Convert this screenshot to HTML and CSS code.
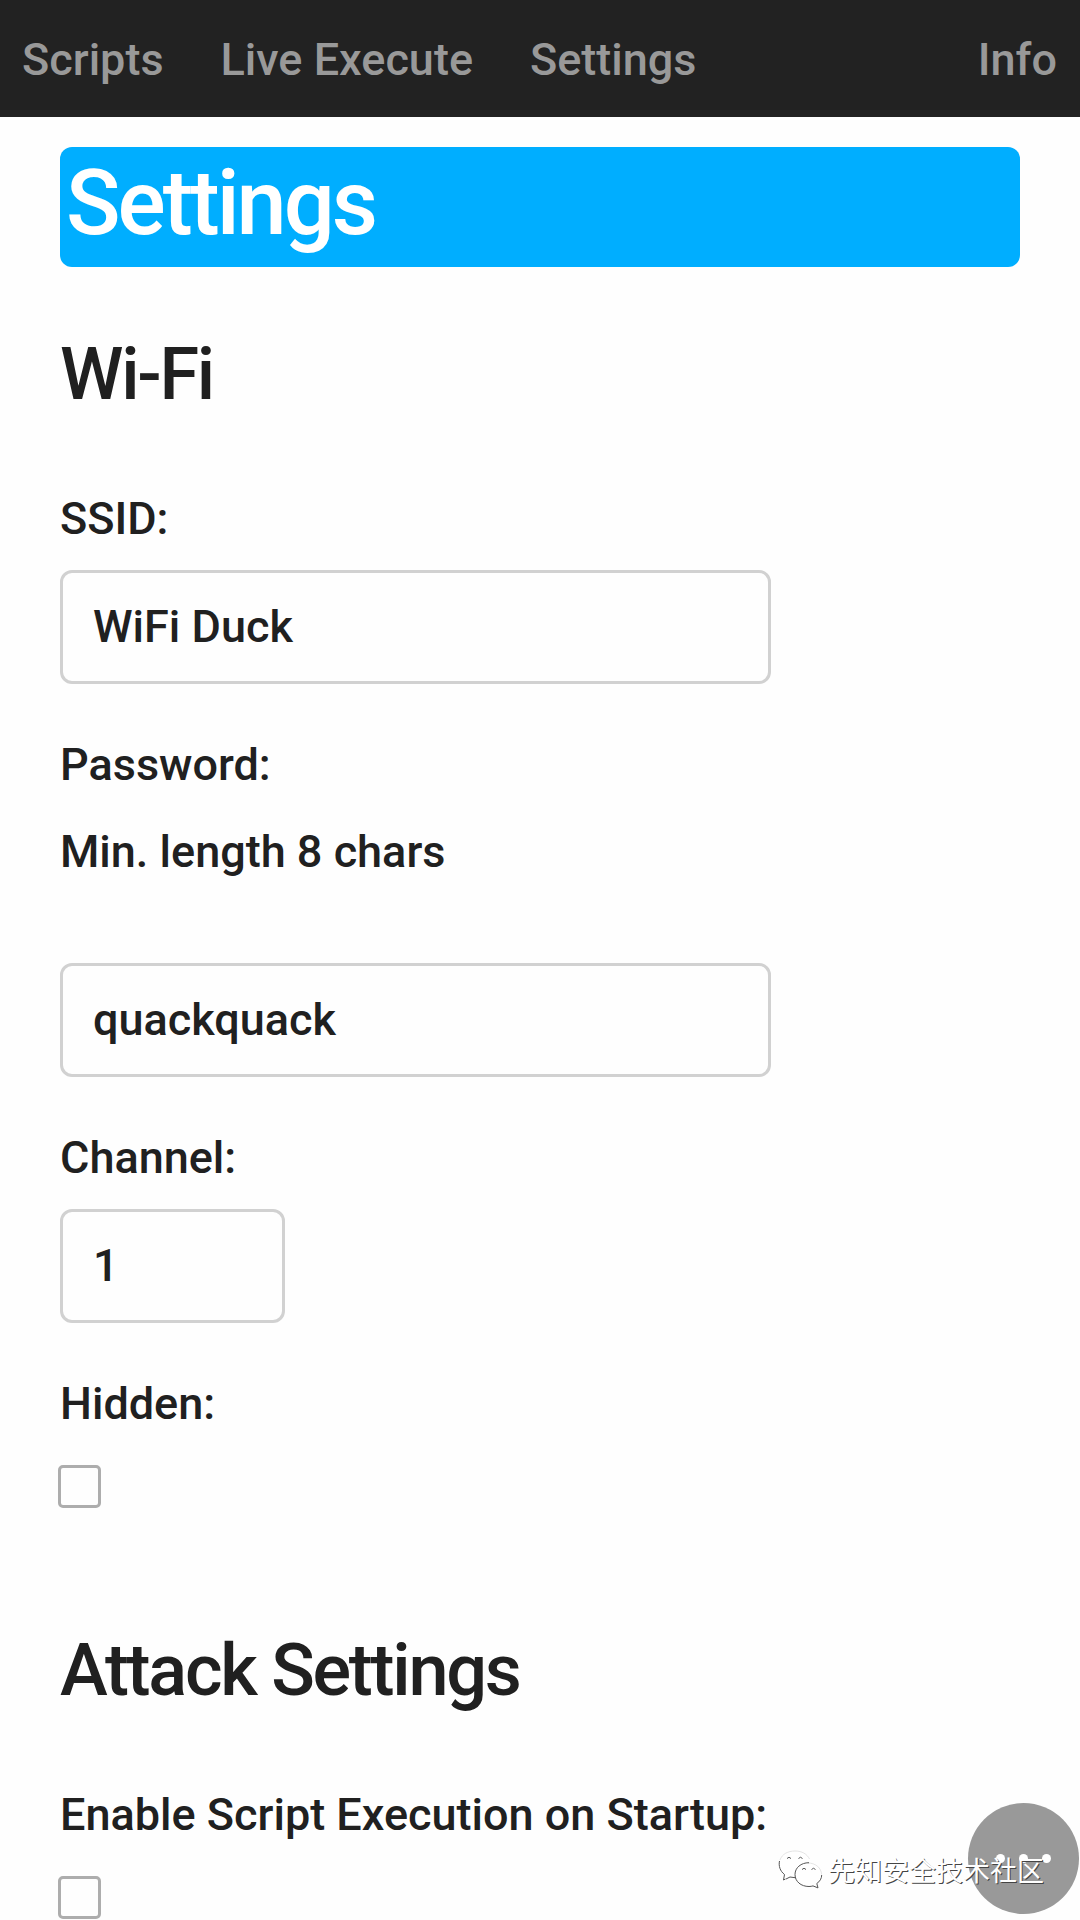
FILE: index.html
```html
<!DOCTYPE html>
<html lang="en">
<head>
<meta charset="utf-8">
<title>WiFi Duck - Settings</title>
<link rel="stylesheet" href="styles.css">
</head>
<body>
<nav class="nav">
  <a class="nav-link">Scripts</a>
  <a class="nav-link">Live Execute</a>
  <a class="nav-link">Settings</a>
  <a class="nav-link nav-right">Info</a>
</nav>
<main class="content">
  <h1 class="title">Settings</h1>
  <section class="section">
    <h2 class="heading">Wi-Fi</h2>
    <label class="label" for="ssid">SSID:</label>
    <input class="field" id="ssid" type="text" value="WiFi Duck">
    <label class="label" for="password">Password:</label>
    <p class="hint">Min. length 8 chars</p>
    <input class="field" id="password" type="text" value="quackquack">
    <label class="label" for="channel">Channel:</label>
    <input class="field field-small" id="channel" type="text" value="1">
    <label class="label" for="hidden">Hidden:</label>
    <input class="check" id="hidden" type="checkbox">
  </section>
  <section class="section section-attack">
    <h2 class="heading">Attack Settings</h2>
    <label class="label" for="autorun">Enable Script Execution on Startup:</label>
    <input class="check" id="autorun" type="checkbox">
  </section>
</main>
<div class="fab"><span class="dot"></span><span class="dot"></span><span class="dot"></span></div>
<div class="watermark">
  <svg class="wechat" viewBox="0 0 46 42" width="46" height="42">
    <path class="bubble" d="M18 2C9 2 2 8 2 15.500c0 4 2 7.500 5.500 10L6 31l6-3c2 .6 4 1 7 1 8 0 15-6 15-13.500S27 2 18 2z"/>
    <path class="bubble-faint" d="M3 11C5 5 11 2 18 2s12 3 14.500 8"/>
    <path class="bubble-edge" d="M2.500 12c-1 5 .5 10 5 13.500L6.500 31l2-1M9 30l4-2 6 .8M10 9.500q2-2.500 4 0M21.500 9.500q2-2.500 4 0"/>
    <path class="bubble" d="M31 14c-7.500 0-13 5-13 11.500S23.500 37 31 37c1.500 0 3-.3 4.500-.7l5.500 2.200-1.500-4.500c3-2 5-5 5-8.500C44.500 19 38.500 14 31 14z"/>
    <path class="bubble-faint" d="M31 14c7.500 0 13.500 5 13.500 11.500"/>
    <path class="bubble-edge" d="M32 13.700c-8 0-14 5-14 11.800 0 7 6 12 14 12 1.500 0 3-.3 4-.6l5 2-1.200-4.400c3-2 4.900-5 4.900-8.500M25 20.500q2-2.500 4 0M34.500 20.500q2-2.500 4 0"/>
  </svg>
  <span class="watermark-text">先知安全技术社区</span>
</div>
</body>
</html>
```
FILE: styles.css
```css
* { box-sizing: border-box; }
body {
  margin: 0;
  height: 1920px;
  overflow: hidden;
  position: relative;
  background: #fefefe;
  color: #202020;
  font: 500 45px/72px Roboto, sans-serif;
}
.nav {
  display: flex;
  gap: 57px;
  height: 117px;
  padding: 24px 23px 0 22px;
  background: #222;
  color: #999;
}
.nav-right { margin-left: auto; }
.content { padding: 30px 60px 0; }
.title {
  margin: 0;
  height: 120px;
  padding: 0 6px;
  border-radius: 12px;
  background: #00aeff;
  color: #fff;
  font-size: 90px;
  font-weight: 500;
  line-height: 114px;
  letter-spacing: -3px;
}
.section {
  display: flex;
  flex-direction: column;
  align-items: flex-start;
  padding-top: 65px;
}
.section-attack { padding-top: 121px; }
.heading {
  margin: 0 0 65px;
  font-size: 72px;
  font-weight: 500;
  line-height: 86px;
  letter-spacing: -2.25px;
}
.hint { margin: 15px 0 60px; }
.field {
  width: 711px;
  height: 114px;
  margin: 15px 0 45px;
  padding: 0 30px 2px;
  border: 3px solid #d1d1d1;
  border-radius: 12px;
  background: transparent;
  color: inherit;
  font: inherit;
}
.field-small { width: 225px; }
.check {
  appearance: none;
  width: 43px;
  height: 43px;
  margin: 25px 0 -1px -2px;
  border: 3px solid #adadad;
  border-radius: 5px;
}
.fab {
  position: absolute;
  left: 968px;
  top: 1803px;
  width: 111px;
  height: 111px;
  border-radius: 50%;
  background: #999;
  display: flex;
  align-items: center;
  justify-content: center;
  gap: 14px;
}
.dot {
  width: 9px;
  height: 9px;
  border-radius: 50%;
  background: #fff;
}
.watermark {
  position: absolute;
  left: 777px;
  top: 1849px;
  display: flex;
  gap: 5px;
}
.bubble { fill: #fff; }
.bubble-faint { fill: none; stroke: #ddd; stroke-width: .8; }
.bubble-edge { fill: none; stroke: #555; stroke-width: 1; }
.watermark-text {
  color: #fff;
  font: 400 27px/42px "Noto Sans CJK SC", sans-serif;
  text-shadow: 1px 1px 0 #444;
}
```
